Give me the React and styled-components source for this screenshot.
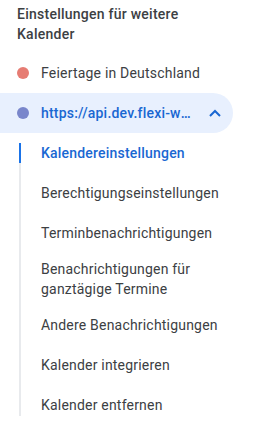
import React from 'react';
import styled, { createGlobalStyle } from 'styled-components';

const GlobalStyle = createGlobalStyle`
  body {
    margin: 0;
    background: #ffffff;
    font-family: Roboto, "Noto Sans", Arial, sans-serif;
  }
`;

const subItems = [
  'Kalendereinstellungen',
  'Berechtigungseinstellungen',
  'Terminbenachrichtigungen',
  'Benachrichtigungen für ganztägige Termine',
  'Andere Benachrichtigungen',
  'Kalender integrieren',
  'Kalender entfernen',
];

function App() {
  return (
    <React.Fragment>
      <GlobalStyle />
      <Nav>
        <Heading>Einstellungen für weitere Kalender</Heading>
        <CalendarRow>
          <Dot color="#e67c73" />
          <RowLabel>Feiertage in Deutschland</RowLabel>
        </CalendarRow>
        <CalendarRow open>
          <Dot color="#7986cb" />
          <RowLabel open>https://api.dev.flexi-workspace.de/calendar</RowLabel>
          <Toggle>
            <svg width="12" height="8" viewBox="0 0 12 8">
              <polyline points="1,7 6,2 11,7" fill="none" stroke="#1967d2" strokeWidth="2" />
            </svg>
          </Toggle>
        </CalendarRow>
        <SubList>
          {subItems.map((item, i) => (
            <SubItem key={item} active={i === 0}>
              <span>{item}</span>
            </SubItem>
          ))}
        </SubList>
      </Nav>
    </React.Fragment>
  );
}

const Nav = styled.nav`
  width: 233px;
  display: flex;
  flex-direction: column;
`;

const Heading = styled.div`
  padding: 4px 20px 9px 17px;
  font-size: 14px;
  font-weight: 500;
  line-height: 20px;
  letter-spacing: 0.25px;
  color: #3c4043;
`;

const CalendarRow = styled.div`
  height: 40px;
  display: flex;
  align-items: center;
  padding: 0 6px 0 17px;
  border-radius: 0 20px 20px 0;
  background: ${p => (p.open ? '#e8f0fe' : 'transparent')};
`;

const Dot = styled.span`
  flex: none;
  width: 12px;
  height: 12px;
  border-radius: 50%;
  background: ${p => p.color};
  margin-right: 12px;
`;

const RowLabel = styled.span`
  flex: 1;
  min-width: 0;
  white-space: nowrap;
  overflow: hidden;
  text-overflow: ellipsis;
  font-size: 14px;
  line-height: 20px;
  letter-spacing: 0.2px;
  font-weight: ${p => (p.open ? 500 : 400)};
  color: ${p => (p.open ? '#1967d2' : '#3c4043')};
`;

const Toggle = styled.span`
  flex: none;
  width: 24px;
  height: 24px;
  margin-left: 10px;
  display: flex;
  align-items: center;
  justify-content: center;
`;

const SubList = styled.div`
  position: relative;
  display: flex;
  flex-direction: column;
  &::before {
    content: '';
    position: absolute;
    left: 19px;
    top: 10px;
    bottom: 9px;
    width: 2px;
    background: #e8eaed;
  }
`;

const SubItem = styled.div`
  position: relative;
  min-height: 40px;
  box-sizing: border-box;
  padding: 6px 12px 6px 41px;
  display: flex;
  align-items: center;
  font-size: 14px;
  line-height: 20px;
  letter-spacing: 0.2px;
  font-weight: ${p => (p.active ? 500 : 400)};
  color: ${p => (p.active ? '#1967d2' : '#3c4043')};
  &::before {
    content: '';
    display: ${p => (p.active ? 'block' : 'none')};
    position: absolute;
    left: 19px;
    top: 10px;
    width: 2px;
    height: 20px;
    background: #1a73e8;
    z-index: 1;
  }
`;

export default App;
